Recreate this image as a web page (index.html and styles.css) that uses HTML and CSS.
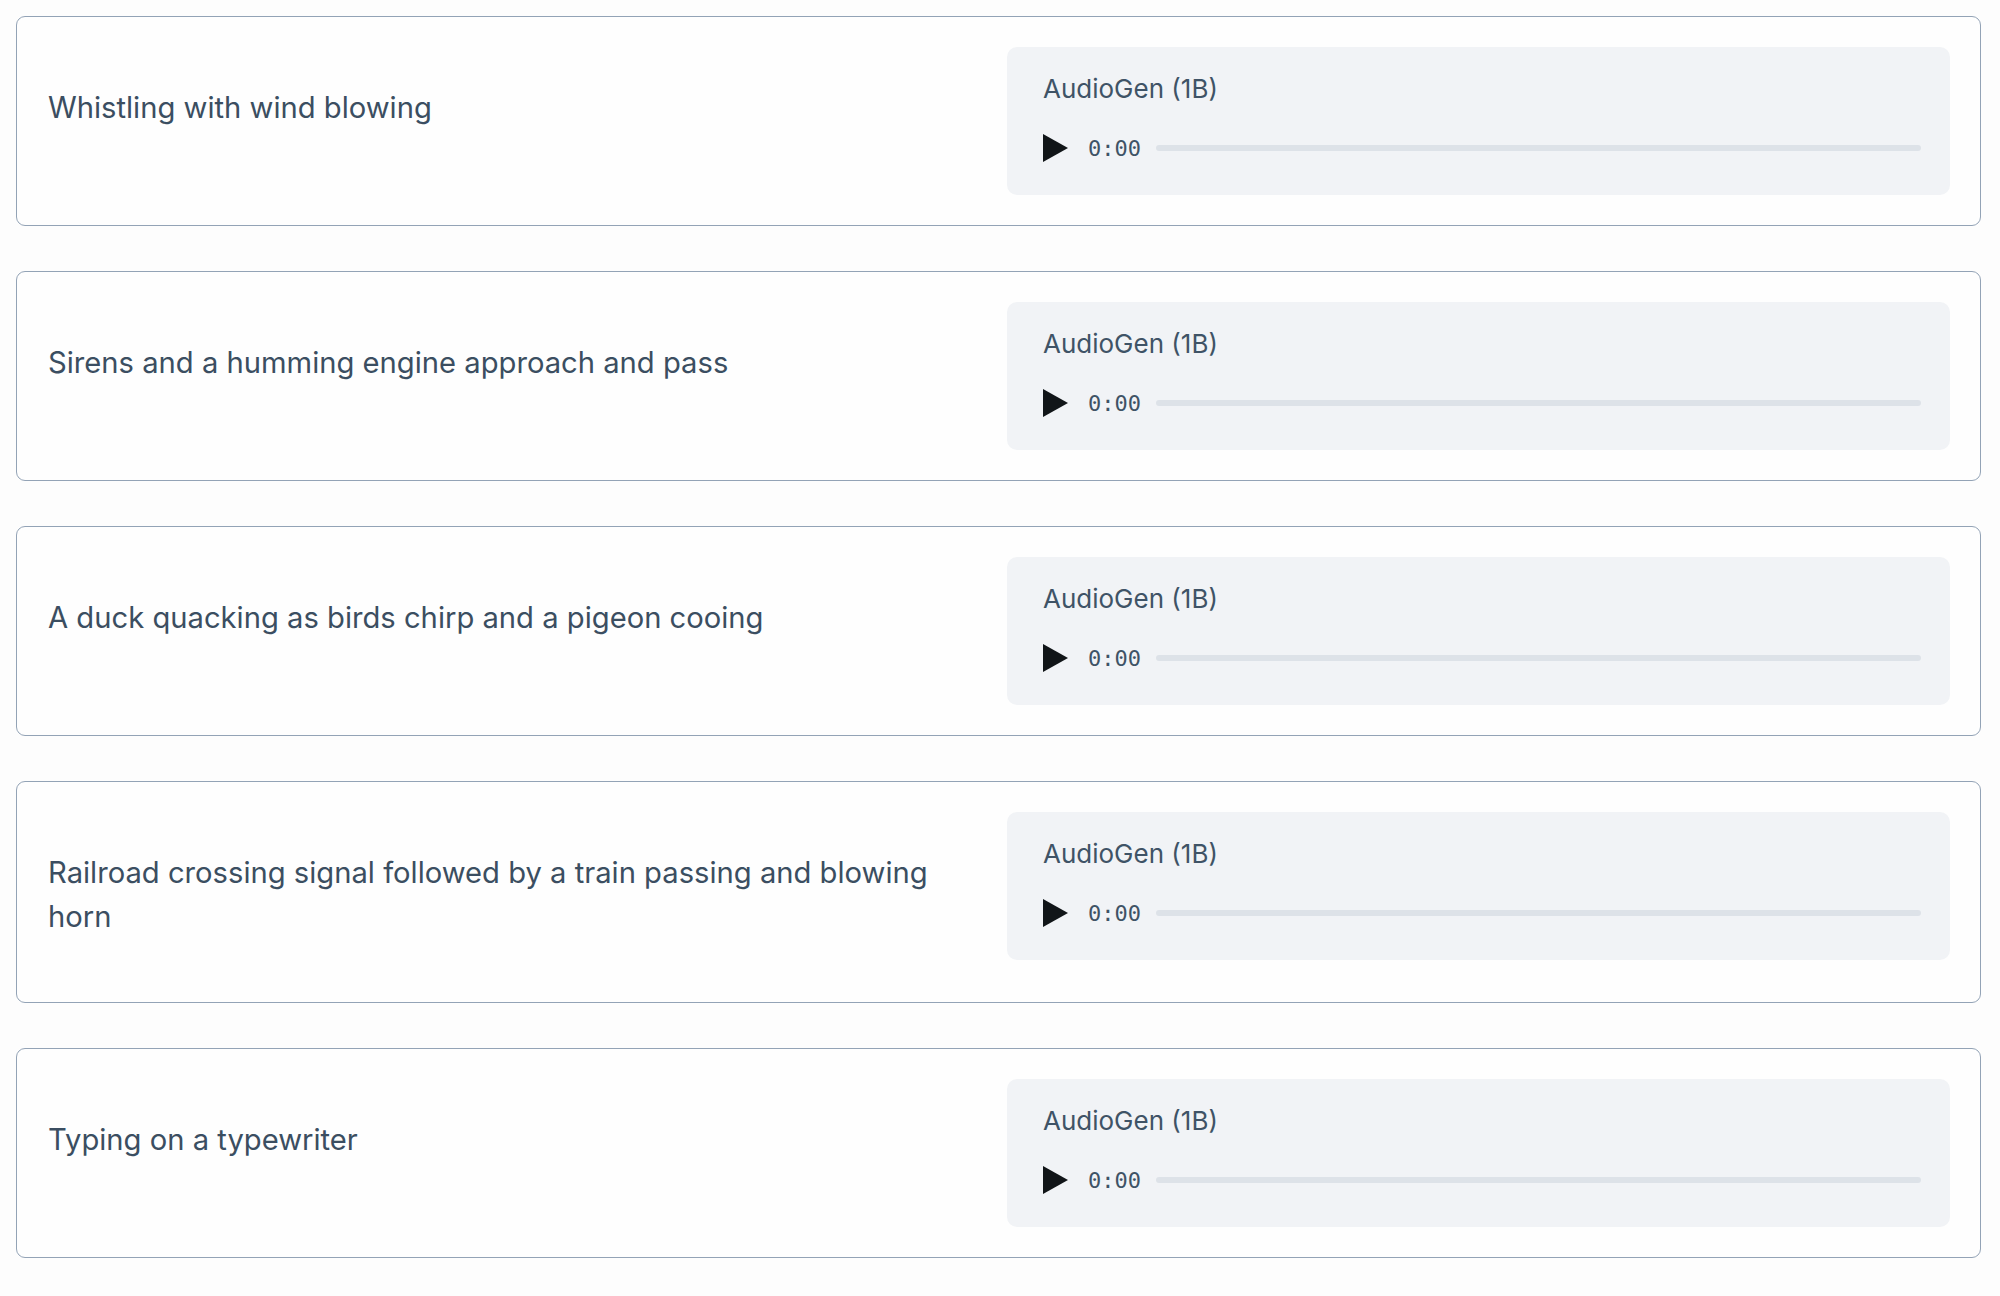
FILE: index.html
```html
<!DOCTYPE html>
<html lang="en">
<head>
<meta charset="utf-8">
<title>AudioGen samples</title>
<link rel="stylesheet" href="styles.css">
</head>
<body>
<main class="list">
  <section class="card">
    <p class="prompt">Whistling with wind blowing</p>
    <div class="panel">
      <div class="label">AudioGen (1B)</div>
      <div class="player">
        <svg class="play" viewBox="0 0 25 28" width="25" height="28"><path d="M0 0 L25 14 L0 28 Z" fill="#111518"/></svg>
        <span class="time">0:00</span>
        <div class="track"></div>
      </div>
    </div>
  </section>
  <section class="card">
    <p class="prompt">Sirens and a humming engine approach and pass</p>
    <div class="panel">
      <div class="label">AudioGen (1B)</div>
      <div class="player">
        <svg class="play" viewBox="0 0 25 28" width="25" height="28"><path d="M0 0 L25 14 L0 28 Z" fill="#111518"/></svg>
        <span class="time">0:00</span>
        <div class="track"></div>
      </div>
    </div>
  </section>
  <section class="card">
    <p class="prompt">A duck quacking as birds chirp and a pigeon cooing</p>
    <div class="panel">
      <div class="label">AudioGen (1B)</div>
      <div class="player">
        <svg class="play" viewBox="0 0 25 28" width="25" height="28"><path d="M0 0 L25 14 L0 28 Z" fill="#111518"/></svg>
        <span class="time">0:00</span>
        <div class="track"></div>
      </div>
    </div>
  </section>
  <section class="card">
    <p class="prompt">Railroad crossing signal followed by a train passing and blowing horn</p>
    <div class="panel">
      <div class="label">AudioGen (1B)</div>
      <div class="player">
        <svg class="play" viewBox="0 0 25 28" width="25" height="28"><path d="M0 0 L25 14 L0 28 Z" fill="#111518"/></svg>
        <span class="time">0:00</span>
        <div class="track"></div>
      </div>
    </div>
  </section>
  <section class="card">
    <p class="prompt">Typing on a typewriter</p>
    <div class="panel">
      <div class="label">AudioGen (1B)</div>
      <div class="player">
        <svg class="play" viewBox="0 0 25 28" width="25" height="28"><path d="M0 0 L25 14 L0 28 Z" fill="#111518"/></svg>
        <span class="time">0:00</span>
        <div class="track"></div>
      </div>
    </div>
  </section>
</main>
</body>
</html>
```

FILE: styles.css
```css
html, body {
  margin: 0;
  padding: 0;
  background: #fdfdfd;
}
body {
  font-family: Inter, "Noto Sans", "Liberation Sans", sans-serif;
  color: #3b4e61;
}
.list {
  display: flex;
  flex-direction: column;
  gap: 45px;
  padding: 16px 19px 16px 16px;
}
.card {
  display: grid;
  grid-template-columns: 1fr 1fr;
  column-gap: 17px;
  align-items: start;
  padding: 30px;
  border: 1px solid #93a3b6;
  border-radius: 9px;
  background: #fefefe;
}
.prompt {
  margin: 0;
  padding: 39px 0 34px 1px;
  font-size: 29.2px;
  line-height: 43.5px;
  color: #3b4e61;
}
.panel {
  background: #f1f3f6;
  border-radius: 10px;
  padding: 26px 29px 27px 36px;
  height: 148px;
  box-sizing: border-box;
}
.label {
  font-size: 26px;
  line-height: 32px;
  color: #3f5366;
}
.player {
  display: flex;
  align-items: center;
  height: 40px;
  margin-top: 23px;
}
.play {
  flex: none;
  display: block;
}
.time {
  margin-left: 20px;
  font-family: "DejaVu Sans Mono", "Liberation Mono", monospace;
  font-size: 22px;
  color: #3f5366;
}
.track {
  flex: 1;
  height: 6px;
  margin-left: 15px;
  border-radius: 3px;
  background: #dde2e8;
}
```
